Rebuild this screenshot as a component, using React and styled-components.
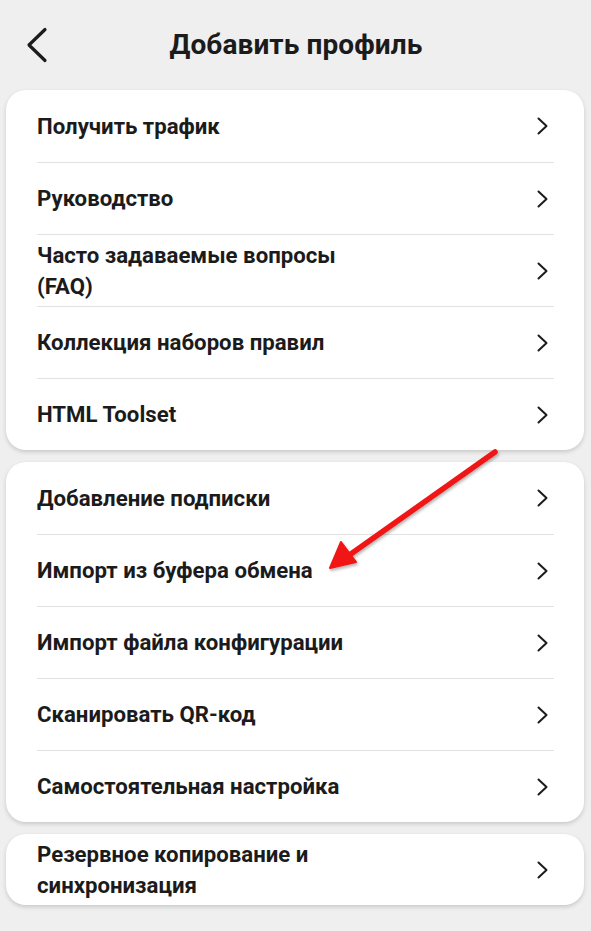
import React from "react";
import styled, { createGlobalStyle } from "styled-components";

const GlobalStyle = createGlobalStyle`
  html, body {
    margin: 0;
    padding: 0;
    background: #efefef;
  }
  body {
    font-family: Roboto, "Noto Sans", "Liberation Sans", sans-serif;
    color: #1b1b1b;
  }
`;

export const Screen = styled.div`
  position: relative;
  width: 591px;
  min-height: 931px;
  background: #efefef;
  box-sizing: border-box;
  padding: 0 7px 0 6px;
  display: flex;
  flex-direction: column;
  gap: 12px;
`;

export const Header = styled.header`
  position: relative;
  box-sizing: border-box;
  height: 78px;
  padding-top: 12px;
  display: flex;
  align-items: center;
  justify-content: center;
`;

export const BackButton = styled.button`
  position: absolute;
  left: 19px;
  top: 27px;
  border: 0;
  padding: 0;
  background: transparent;
  display: flex;
`;

export const Title = styled.h1`
  margin: 0 0 2px 2px;
  font-size: 28px;
  font-weight: 700;
  color: #1b1b1b;
  letter-spacing: 0.1px;
`;

export const Card = styled.section`
  background: #fff;
  border-radius: 20px;
  box-shadow: 0 2px 4px rgba(0, 0, 0, 0.16);
  padding: 0 30px 0 31px;
`;

export const Row = styled.div`
  height: ${(p) => (p.$h ? p.$h : 72)}px;
  display: flex;
  align-items: center;
  justify-content: space-between;
  border-top: ${(p) => (p.$first ? "none" : "1px solid #e2e2e2")};
  box-sizing: border-box;
`;

export const Label = styled.span`
  font-size: 22.2px;
  font-weight: 700;
  line-height: 31px;
  color: #1b1b1b;
  max-width: ${(p) => (p.$narrow ? "330px" : "none")};
`;

export const Chevron = styled.svg`
  flex: none;
  width: 14px;
  height: 18px;
  margin-right: 4px;
`;

export const Pointer = styled.svg`
  position: absolute;
  left: 0;
  top: 0;
  width: 591px;
  height: 931px;
  pointer-events: none;
`;

const ChevronRight = () => (
  <Chevron viewBox="0 0 14 18">
    <path d="M2.5 1.5 L10.5 9 L2.5 16.5" fill="none" stroke="#1b1b1b" strokeWidth="2" strokeLinecap="round" strokeLinejoin="round" />
  </Chevron>
);

const groups = [
  [
    { label: "Получить трафик" },
    { label: "Руководство" },
    { label: "Часто задаваемые вопросы (FAQ)", narrow: true },
    { label: "Коллекция наборов правил" },
    { label: "HTML Toolset" },
  ],
  [
    { label: "Добавление подписки" },
    { label: "Импорт из буфера обмена" },
    { label: "Импорт файла конфигурации" },
    { label: "Сканировать QR-код" },
    { label: "Самостоятельная настройка" },
  ],
  [{ label: "Резервное копирование и синхронизация", narrow: true, h: 71 }],
];

const App = () => {
  return (
    <>
      <GlobalStyle />
      <Screen>
        <Header>
          <BackButton aria-label="Назад">
            <svg width="24" height="36" viewBox="0 0 24 36">
              <path d="M20 2.5 L4 18 L20 33.5" fill="none" stroke="#1b1b1b" strokeWidth="3.2" strokeLinecap="round" strokeLinejoin="round" />
            </svg>
          </BackButton>
          <Title>Добавить профиль</Title>
        </Header>
        {groups.map((items, gi) => (
          <Card key={gi}>
            {items.map((item, i) => (
              <Row key={item.label} $first={i === 0} $h={item.h}>
                <Label $narrow={item.narrow}>{item.label}</Label>
                <ChevronRight />
              </Row>
            ))}
          </Card>
        ))}
        <Pointer viewBox="0 0 591 931">
          <defs>
            <filter id="shade" x="-10%" y="-10%" width="120%" height="120%">
              <feDropShadow dx="1" dy="2" stdDeviation="1.5" floodColor="#000" floodOpacity="0.3" />
            </filter>
          </defs>
          <g filter="url(#shade)" fill="#f01414" stroke="#f01414">
            <line x1="495" y1="452" x2="348" y2="556" strokeWidth="5.5" strokeLinecap="round" />
            <polygon points="330,568 341,542 356,562" strokeWidth="2" strokeLinejoin="round" />
          </g>
        </Pointer>
      </Screen>
    </>
  );
};

export default App;
